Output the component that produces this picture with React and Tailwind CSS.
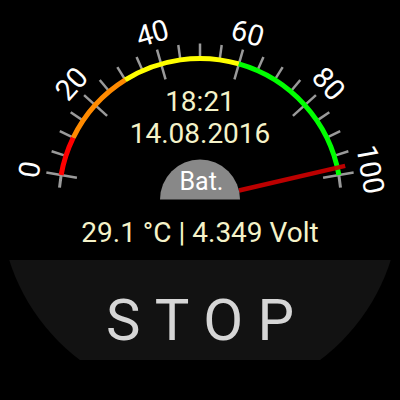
import React from 'react';

const CX = 200;
const CY = 199.5;

// value 0..100 -> angle in degrees (math orientation)
const ang = (v) => 170 - 1.6 * v;
const pt = (v, r) => {
  const a = (ang(v) * Math.PI) / 180;
  return [CX + r * Math.cos(a), CY - r * Math.sin(a)];
};
const arc = (a, b, r) => {
  const [x1, y1] = pt(a, r);
  const [x2, y2] = pt(b, r);
  return `M ${x1} ${y1} A ${r} ${r} 0 0 1 ${x2} ${y2}`;
};

const segments = [
  [0, 10, '#ff0000'],
  [10, 30, '#ff8a00'],
  [30, 60, '#ffff00'],
  [60, 100, '#00ff00'],
];

const Gauge = ({ value }) => {
  const ticks = [];
  for (let v = 0; v <= 100; v += 5) ticks.push(v);
  const [nx1, ny1] = pt(value, 40);
  const [nx2, ny2] = pt(value, 149);

  return (
    <svg className="absolute inset-0" width="400" height="212" viewBox="0 0 400 212">
      <path d={arc(-3.2, 103.2, 141)} stroke="#9a9a9a" strokeWidth="3" fill="none" />
      {ticks.map((v) => {
        const major = v % 20 === 0;
        const [x1, y1] = pt(v, major ? 125 : 141);
        const [x2, y2] = pt(v, 156);
        return <line key={v} x1={x1} y1={y1} x2={x2} y2={y2} stroke="#9a9a9a" strokeWidth="2.5" />;
      })}
      {segments.map(([a, b, c]) => (
        <path key={a} d={arc(a, b, 141)} stroke={c} strokeWidth="5" fill="none" />
      ))}
      {[0, 20, 40, 60, 80, 100].map((v) => {
        const [x, y] = pt(v, 173);
        return (
          <text
            key={v}
            x={x}
            y={y}
            fill="#ffffff"
            fontSize="29"
            fontFamily="Roboto, sans-serif"
            textAnchor="middle"
            dominantBaseline="central"
            transform={`rotate(${90 - ang(v)} ${x} ${y})`}
          >
            {v}
          </text>
        );
      })}
      <line x1={nx1} y1={ny1} x2={nx2} y2={ny2} stroke="#cc0000" strokeWidth="4.5" opacity="0.92" />
      <path d={`M ${CX - 40} ${CY} A 40 40 0 0 1 ${CX + 40} ${CY} Z`} fill="#888888" />
      <text x={CX + 1.5} y="189.5" fill="#ffffff" fontSize="25" fontFamily="Roboto, sans-serif" textAnchor="middle">
        Bat.
      </text>
    </svg>
  );
};

export default function App() {
  return (
    <div className="w-[400px] h-[400px] bg-black">
      <div className="w-[400px] h-[400px] rounded-full overflow-hidden bg-black flex flex-col font-['Roboto',sans-serif]">
        <div className="relative h-[212px] shrink-0">
          <Gauge value={98.1} />
          <div className="relative flex flex-col items-center pt-[86.3px] text-[28px] leading-[31.6px] text-[#f5f3c9]">
            <span>18:21</span>
            <span>14.08.2016</span>
          </div>
        </div>
        <div className="h-[48px] shrink-0 flex justify-center pt-[6.7px] text-[28px] leading-[28px] text-[#f5f3c9] whitespace-pre">
          29.1 °C | 4.349 Volt
        </div>
        <div className="h-[100px] shrink-0 bg-[#121212] flex justify-center pt-[31.2px]">
          <span className="text-[58px] leading-none tracking-[0.25em] pl-[0.25em] text-[#d6d6d6]">STOP</span>
        </div>
      </div>
    </div>
  );
}
